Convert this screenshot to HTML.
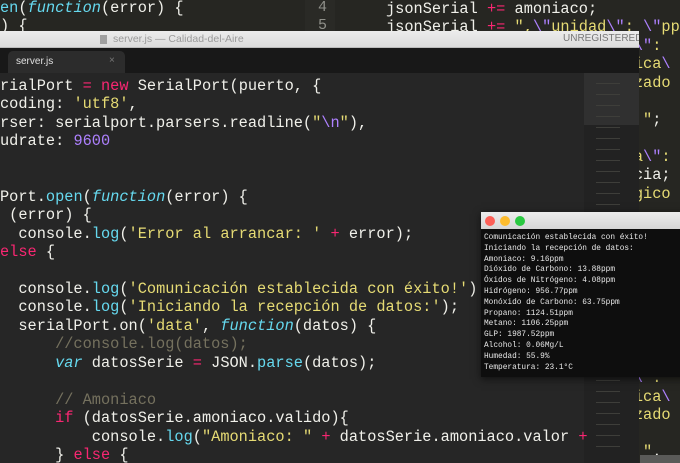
<!DOCTYPE html>
<html><head><meta charset="utf-8"><style>
*{margin:0;padding:0;box-sizing:border-box}
body{width:680px;height:463px;overflow:hidden;background:#262622;position:relative;font-family:"Liberation Mono",monospace}
pre{font-family:"Liberation Mono",monospace;position:absolute;white-space:pre;color:#f0f0ea}
.k{color:#f92672}.s{color:#e6db74}.n{color:#ae81ff}.f{color:#66d9ef}.i{color:#66d9ef;font-style:italic}.c{color:#75715e}.e{color:#ae81ff}
</style></head><body>
<div style="position:absolute;left:0;top:0;width:305px;height:32px;background:#262622"></div>
<pre style="left:0;top:-1px;font-size:15.3px;line-height:18.45px"><span class="f">en</span>(<span class="i">function</span>(error) {
) {
]  ]o  ('E</pre>
<div style="position:absolute;left:305px;top:0;width:30px;height:32px;background:#2a2a26"></div>
<pre style="left:318px;top:-1px;font-size:15px;line-height:18.45px;color:#8f908a">4
5</pre>
<div style="position:absolute;left:335px;top:0;width:345px;height:463px;background:#262622"></div>
<pre style="left:386px;top:0px;font-size:15.3px;line-height:18.45px">jsonSerial <span class="k">+=</span> amoniaco;
jsonSerial <span class="k">+=</span> <span class="s">",<span class="e">\"</span>unidad<span class="e">\"</span>: <span class="e">\"</span>pp</span>
                          <span class="s">n<span class="e">\"</span>:</span>
                          <span class="s">mica<span class="e">\</span></span>
                          <span class="s">nzado</span>

                          <span class="s">: "</span>;
                          ;
                          <span class="s">ia<span class="e">\"</span>:</span>
                          ncia;
                          <span class="s">ogico</span>




                          <span class="s">arbon</span>
                          <span class="n">true</span>,

                          ono;
                          <span class="s"><span class="e">\"</span>pp</span>
                          <span class="s">n<span class="e">\"</span>:</span>
                          <span class="s">mica<span class="e">\</span></span>
                          <span class="s">nzado</span>

                          <span class="s">. "</span>.</pre>
<div style="position:absolute;left:640px;top:455px;width:40px;height:8px;background:#5a5a58"></div>
<div style="position:absolute;left:0;top:31px;width:639px;height:432px;background:#262626;overflow:hidden">
 <div style="position:absolute;left:0;top:0;width:639px;height:17px;background:linear-gradient(#ececec,#dcdcdc);border-bottom:1px solid #bbb;font-family:'Liberation Sans',sans-serif;font-size:10.5px;color:#9a9a9a">
  <div style="position:absolute;left:100px;top:4px;width:7px;height:9px;background:#a0a0a0"></div>
  <span style="position:absolute;left:113px;top:2px">server.js — Calidad-del-Aire</span>
  <span style="position:absolute;left:563px;top:2px;color:#777;font-size:10px">UNREGISTERED</span>
 </div>
 <div style="position:absolute;left:0;top:17px;width:639px;height:25px;background:#181818">
  <div style="position:absolute;left:8px;top:3px;width:117px;height:22px;background:#2c2c2c;border-radius:5px 5px 0 0;font-family:'Liberation Sans',sans-serif;font-size:10px;color:#e0e0e0">
   <span style="position:absolute;left:8px;top:5px">server.js</span>
   <span style="position:absolute;left:101px;top:4px;color:#777">×</span>
  </div>
 </div>
 <div style="position:absolute;left:584px;top:42px;width:55px;height:390px;background:#222">
  <div style="position:absolute;left:0;top:0;width:55px;height:52px;background:#303030"></div>
  <div style="position:absolute;left:12px;top:5px;width:24px;height:370px;background:repeating-linear-gradient(transparent 0 5px,#3e3e3a 5px 6px,transparent 6px 11px)"></div>
 </div>
<pre style="left:0;top:46px;font-size:15.3px;line-height:18.45px">rialPort <span class="k">=</span> <span class="k">new</span> SerialPort(puerto, {
coding: <span class="s">'utf8'</span>,
rser: serialport.parsers.readline(<span class="s">"<span class="n">\n</span>"</span>),
udrate: <span class="n">9600</span>


Port.<span class="f">open</span>(<span class="i">function</span>(error) {
 (error) {
  console.<span class="f">log</span>(<span class="s">'Error al arrancar: '</span> <span class="k">+</span> error);
<span class="k">else</span> {

  console.<span class="f">log</span>(<span class="s">'Comunicación establecida con éxito!'</span>)
  console.<span class="f">log</span>(<span class="s">'Iniciando la recepción de datos:'</span>);
  serialPort.on(<span class="s">'data'</span>, <span class="i">function</span>(datos) {
      <span class="c">//console.log(datos);</span>
      <span class="i">var</span> datosSerie <span class="k">=</span> JSON.<span class="f">parse</span>(datos);

      <span class="c">// Amoniaco</span>
      <span class="k">if</span> (datosSerie.amoniaco.valido){
          console.<span class="f">log</span>(<span class="s">"Amoniaco: "</span> <span class="k">+</span> datosSerie.amoniaco.valor <span class="k">+</span>
      } <span class="k">else</span> {</pre>
</div>
<div style="position:absolute;left:481px;top:212px;width:210px;height:165px;background:#0e0e0e;box-shadow:0 2px 8px rgba(0,0,0,.6)">
 <div style="position:absolute;left:0;top:0;width:210px;height:17px;background:linear-gradient(#ececec,#d6d6d6)">
  <div style="position:absolute;left:4px;top:4px;width:10px;height:10px;border-radius:50%;background:#fc5f57"></div>
  <div style="position:absolute;left:19px;top:4px;width:10px;height:10px;border-radius:50%;background:#fdbc2e"></div>
  <div style="position:absolute;left:34px;top:4px;width:10px;height:10px;border-radius:50%;background:#29c840"></div>
 </div>
<pre style="left:3px;top:21px;font-size:7.8px;line-height:10.8px;color:#e8e8e8">Comunicación establecida con éxito!
Iniciando la recepción de datos:
Amoniaco: 9.16ppm
Dióxido de Carbono: 13.88ppm
Óxidos de Nitrógeno: 4.08ppm
Hidrógeno: 956.77ppm
Monóxido de Carbono: 63.75ppm
Propano: 1124.51ppm
Metano: 1106.25ppm
GLP: 1987.52ppm
Alcohol: 0.06Mg/L
Humedad: 55.9%
Temperatura: 23.1°C</pre>
</div>
</body></html>
